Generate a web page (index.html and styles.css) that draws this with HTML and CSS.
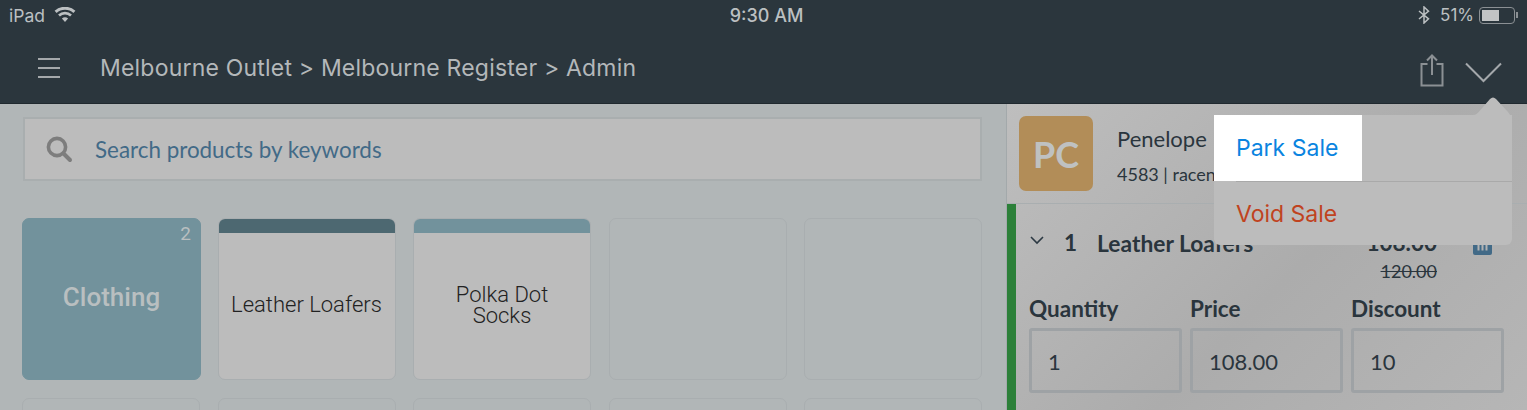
FILE: index.html
```html
<!DOCTYPE html>
<html lang="en">
<head>
    <meta charset="UTF-8">
    <meta name="viewport" content="width=device-width, initial-scale=1.0">
    <title>Melbourne Register</title>
    <link rel="stylesheet" href="styles.css">
</head>
<body>
    <!-- Top bar with iPad status row -->
    <header class="topbar">
        <div class="status">
            <div class="status-left">
                <span>iPad</span>
                <svg class="wifi" width="22" height="16" viewBox="0 0 22 15"><path d="M11 14.5 7.9 11.1a4.6 4.6 0 0 1 6.2 0zM5.9 9 4.1 7a10.3 10.3 0 0 1 13.8 0l-1.8 2a7.6 7.6 0 0 0-10.2 0zM2.6 5.4.6 3.3a15.4 15.4 0 0 1 20.8 0l-2 2.1a12.5 12.5 0 0 0-16.8 0z" fill="#bcc0c2"/></svg>
            </div>
            <div class="status-time">9:30 AM</div>
            <div class="status-right">
                <svg class="bluetooth" width="12" height="18" viewBox="0 0 12 18"><path d="M1 5 10.5 12.8 6 17V1L10.5 5.2 1 13" fill="none" stroke="#bcc0c2" stroke-width="1.5"/></svg>
                <span class="percent">51%</span>
                <div class="battery"><div class="battery-fill"></div></div>
                <div class="battery-tip"></div>
            </div>
        </div>
        <div class="navrow">
            <div class="menu-icon"><span></span><span></span><span></span></div>
            <div class="crumbs">Melbourne Outlet &gt; Melbourne Register &gt; Admin</div>
            <svg class="share" width="24" height="33" viewBox="0 0 24 33"><path d="M7.5 10H1.5V31.5H22.5V10H16.5M12 21V1.5M7 6.5 12 1.5 17 6.5" fill="none" stroke="#8b9094" stroke-width="2"/></svg>
            <svg class="chevron" width="37" height="21" viewBox="0 0 37 21"><path d="M1 1.5 18.5 19 36 1.5" fill="none" stroke="#a4a8ab" stroke-width="2"/></svg>
        </div>
    </header>

    <div class="content">
        <!-- Products -->
        <main class="products">
            <div class="search">
                <svg width="28" height="28" viewBox="0 0 28 28"><circle cx="12" cy="12" r="8.6" fill="none" stroke="#7d7d7d" stroke-width="3.6"/><path d="M18.5 18.5 25 25" stroke="#7d7d7d" stroke-width="4" stroke-linecap="round"/></svg>
                <span class="search-text">Search products by keywords</span>
            </div>
            <div class="tiles">
                <div class="tile tile-group"><span class="count">2</span>Clothing</div>
                <div class="tile tile-item"><div class="band band-dark"></div><div class="tile-name">Leather Loafers</div></div>
                <div class="tile tile-item"><div class="band band-light"></div><div class="tile-name">Polka Dot<br>Socks</div></div>
                <div class="tile tile-empty"></div>
                <div class="tile tile-empty"></div>
                <div class="tile tile-empty"></div>
                <div class="tile tile-empty"></div>
                <div class="tile tile-empty"></div>
                <div class="tile tile-empty"></div>
                <div class="tile tile-empty"></div>
            </div>
        </main>

        <!-- Sale panel -->
        <aside class="sale">
            <div class="customer">
                <div class="avatar">PC</div>
                <div class="customer-info">
                    <div class="customer-name">Penelope</div>
                    <div class="customer-meta">4583 | racen</div>
                </div>
            </div>
            <div class="line">
                <div class="line-head">
                    <svg class="caret" width="14" height="9" viewBox="0 0 14 9"><path d="M1 1 7 7 13 1" fill="none" stroke="#2c3943" stroke-width="1.6"/></svg>
                    <span class="qty">1</span>
                    <span class="line-name">Leather Loafers</span>
                    <div class="line-price">
                        <div class="price-now">108.00</div>
                        <div class="price-was">120.00</div>
                    </div>
                    <svg class="trash" width="19" height="17" viewBox="0 0 19 17"><rect width="19" height="17" rx="2" fill="#426a87"/><path d="M5.5 4V12.5M9.5 4V12.5M13.5 4V12.5" stroke="#b3b3b3" stroke-width="2"/></svg>
                </div>
                <div class="fields">
                    <div class="field"><label>Quantity</label><div class="input">1</div></div>
                    <div class="field"><label>Price</label><div class="input">108.00</div></div>
                    <div class="field"><label>Discount</label><div class="input">10</div></div>
                </div>
            </div>
        </aside>
    </div>

    <!-- Dropdown over everything -->
    <div class="popover">
        <svg class="popover-arrow" width="50" height="30" viewBox="0 0 50 30"><path d="M0 18H11C14 18 16 16 18 13.5L28 2C30 0 32 0 34 2L46 15C49 19 50 21 50 24V30H0z" fill="#bcbcbc"/></svg>
        <div class="popover-park"><span class="park">Park Sale</span></div>
        <div class="popover-divider"></div>
        <div class="popover-void">Void Sale</div>
    </div>
</body>
</html>
```

FILE: styles.css
```css
html, body {
    margin: 0;
    padding: 0;
}
body {
    width: 1527px;
    height: 410px;
    overflow: hidden;
    position: relative;
    background-color: #b1b6b7;
    font-family: "Lato", sans-serif;
    color: #2a353d;
}
.topbar {
    height: 104px;
    background-color: #2b363d;
    border-bottom: 1px solid #20292f;
    box-sizing: border-box;
    color: #bcc0c2;
}
.status {
    height: 32px;
    box-sizing: border-box;
    display: grid;
    grid-template-columns: 1fr auto 1fr;
    align-items: center;
    padding: 0 9px 2px;
    font-family: "Inter", sans-serif;
    font-size: 17.5px;
}
.status-left {
    display: flex;
    align-items: center;
    gap: 9px;
}
.status-time {
    font-size: 18px;
    font-weight: 500;
    margin-left: 6px;
}
.status-right {
    display: flex;
    align-items: center;
    justify-content: flex-end;
}
.percent {
    margin-left: 10px;
    font-size: 17px;
}
.battery {
    width: 36px;
    height: 17px;
    box-sizing: border-box;
    border: 1px solid #8b9094;
    border-radius: 4px;
    padding: 2px;
    margin-left: 5px;
}
.battery-fill {
    width: 17px;
    height: 100%;
    background-color: #c2c4c5;
}
.battery-tip {
    width: 2px;
    height: 6px;
    margin-left: 1px;
    background-color: #8b9094;
}
.navrow {
    height: 71px;
    display: flex;
    align-items: center;
    padding: 0 25px 0 38px;
}
.menu-icon {
    width: 22px;
    display: flex;
    flex-direction: column;
    gap: 7px;
}
.menu-icon span {
    height: 2px;
    background-color: #a4a8ab;
}
.crumbs {
    margin: 1px 0 0 40px;
    flex: 1;
    font-family: "Inter", sans-serif;
    font-size: 23px;
    letter-spacing: 0.2px;
    color: #b4b8ba;
}
.share {
    margin-right: 21px;
    margin-top: 6px;
}
.chevron {
    margin-top: 9px;
}
.content {
    display: flex;
    height: 306px;
    overflow: hidden;
}
.products {
    width: 1006px;
    box-sizing: border-box;
    padding: 13px 24px 0 22px;
}
.search {
    height: 64px;
    box-sizing: border-box;
    border: 2px solid #a9aeaf;
    background-color: #bcbcbc;
    display: flex;
    align-items: center;
    padding-left: 20px;
    gap: 22px;
    font-size: 22.4px;
    color: #426a87;
    margin-left: 1px;
}
.search-text {
    padding-top: 1px;
}
.tiles {
    display: grid;
    grid-template-columns: repeat(5, 178px);
    grid-auto-rows: 162px;
    column-gap: 17.5px;
    row-gap: 18px;
    margin-top: 37px;
}
.tile {
    box-sizing: border-box;
    border-radius: 7px;
    border: 1px solid #a9aeb0;
    overflow: hidden;
}
.tile-group {
    margin-right: -1px;
    background-color: #72929c;
    border-color: #72929c;
    color: #b9bfc0;
    position: relative;
    display: flex;
    align-items: center;
    justify-content: center;
    font-family: "Roboto", sans-serif;
    font-size: 26px;
    font-weight: 500;
    padding-bottom: 5px;
}
.count {
    position: absolute;
    top: 3px;
    right: 9px;
    font-size: 19px;
    font-weight: 400;
}
.tile-item {
    background-color: #bcbcbc;
    display: flex;
    flex-direction: column;
}
.band {
    height: 14px;
    flex: none;
}
.band-dark {
    background-color: #4d6871;
}
.band-light {
    background-color: #72929c;
}
.tile-name {
    flex: 1;
    display: flex;
    align-items: center;
    justify-content: center;
    text-align: center;
    font-family: "Roboto", sans-serif;
    font-size: 22px;
    font-weight: 300;
    line-height: 21px;
    color: #222;
    padding-bottom: 3px;
}
.sale {
    width: 521px;
    box-sizing: border-box;
    border-left: 1px solid #a3a9ab;
    background: linear-gradient(135deg, #bebebe 0%, #acacac 55%, #b6b6b6 100%);
}
.customer {
    height: 100px;
    box-sizing: border-box;
    border-bottom: 1px solid #a9aeb0;
    display: flex;
    padding: 12px 0 0 12px;
}
.avatar {
    width: 74px;
    height: 75px;
    border-radius: 7px;
    background-color: #b28d58;
    color: #bfc1c1;
    font-size: 36px;
    font-weight: 700;
    display: flex;
    align-items: center;
    justify-content: center;
}
.customer-info {
    margin-left: 24px;
    white-space: nowrap;
}
.customer-name {
    font-size: 22px;
    margin-top: 9px;
}
.customer-meta {
    font-size: 18px;
    margin-top: 11px;
}
.line {
    height: 206px;
    box-sizing: border-box;
    border-left: 9px solid #2c8039;
    padding: 0 23px 0 13px;
}
.line-head {
    display: flex;
    align-items: flex-start;
    height: 91px;
}
.caret {
    margin: 32px 0 0 1px;
}
.qty {
    margin: 25px 0 0 20px;
    font-size: 22.5px;
    font-weight: 700;
}
.line-name {
    margin: 25px 0 0 20px;
    font-size: 22.8px;
    font-weight: 700;
    flex: 1;
}
.line-price {
    margin-top: 25px;
    text-align: right;
    font-size: 22.5px;
    font-weight: 700;
}
.price-was {
    font-size: 18px;
    font-weight: 400;
    text-decoration: line-through;
    margin-top: 4px;
}
.trash {
    margin: 34px 12px 0 36px;
}
.fields {
    display: flex;
    gap: 8px;
}
.field {
    width: 153px;
}
.field label {
    display: block;
    font-size: 22.5px;
    font-weight: 700;
    margin-bottom: 6px;
}
.input {
    height: 65px;
    box-sizing: border-box;
    border: 3px solid #9ea2a5;
    border-radius: 3px;
    font-size: 22px;
    padding: 17px 16px;
}
.popover {
    position: absolute;
    left: 1214px;
    top: 115px;
    width: 298px;
    height: 130px;
    background-color: #bcbcbc;
    border-radius: 0 0 6px 6px;
    font-family: "Inter", sans-serif;
    font-size: 23px;
}
.popover-arrow {
    position: absolute;
    right: 0;
    top: -18px;
}
.popover-park {
    position: relative;
    height: 66px;
}
.park {
    background-color: #fff;
    color: #0a84e0;
    width: 148px;
    height: 66px;
    box-sizing: border-box;
    padding-left: 22px;
    display: flex;
    align-items: center;
}
.popover-divider {
    position: relative;
    height: 1px;
    margin-left: 22px;
    background-color: #a9a9a9;
}
.popover-void {
    height: 63px;
    display: flex;
    align-items: center;
    padding-left: 22px;
    color: #c0431f;
}
```
